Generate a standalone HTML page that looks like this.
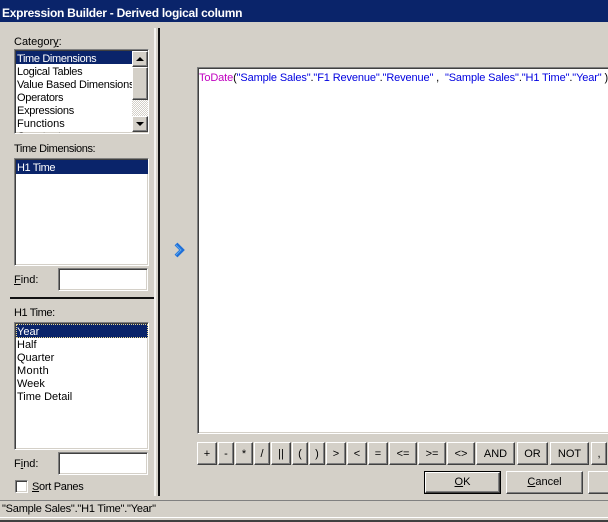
<!DOCTYPE html>
<html><head><meta charset="utf-8">
<style>
html,body{margin:0;padding:0;}
body{width:608px;height:522px;overflow:hidden;background:#d4d0c8;position:relative;font:11px/13px "Liberation Sans",sans-serif;color:#000;}
div,span.a{position:absolute;box-sizing:border-box;}
.t{white-space:nowrap;font-size:11px;line-height:13px;height:13px;margin-top:1px;}
.sunk{background:#fff;border:1px solid;border-color:#808080 #fff #fff #808080;box-shadow:inset 1px 1px 0 #404040,inset -1px -1px 0 #d4d0c8;}
.b{background:#d4d0c8;border:1px solid;border-color:#fff #404040 #404040 #fff;box-shadow:inset -1px -1px 0 #808080;text-align:center;font-size:11px;line-height:22px;white-space:nowrap;}
.sel{background:#0a246a;color:#fff;}
u{text-decoration:underline;}
</style></head><body>
<div style="left:0;top:0;width:608px;height:22px;background:#0a246a;"></div>
<div class="t" style="left:2px;top:6px;color:#fff;font-weight:bold;font-size:12px;letter-spacing:-0.26px;">Expression Builder - Derived logical column</div>

<div style="left:154px;top:28px;width:2px;height:468px;background:#f4f2ee;"></div>
<div style="left:158px;top:28px;width:2px;height:468px;background:#111;"></div>

<div class="t" style="left:14px;top:35px;">Categor<u>y</u>:</div>
<div class="sunk" style="left:14px;top:49px;width:135px;height:85px;overflow:hidden;">
  <div class="sel" style="left:1px;top:1px;width:116px;height:13px;"></div>
  <div class="t" style="left:2px;top:2px;color:#fff;letter-spacing:-0.35px;">Time Dimensions</div>
  <div class="t" style="left:2px;top:15px;letter-spacing:-0.3px;">Logical Tables</div>
  <div class="t" style="left:2px;top:28px;letter-spacing:-0.22px;">Value Based Dimensions</div>
  <div class="t" style="left:2px;top:41px;letter-spacing:-0.3px;">Operators</div>
  <div class="t" style="left:2px;top:54px;letter-spacing:-0.27px;">Expressions</div>
  <div class="t" style="left:2px;top:67px;">Functions</div>
  <div class="t" style="left:2px;top:80px;">Constants</div>
  <div style="left:117px;top:1px;width:16px;height:81px;background:repeating-conic-gradient(#fff 0 25%,#d4d0c8 0 50%) 0 0/2px 2px;"></div>
  <div class="b" style="left:117px;top:1px;width:16px;height:16px;"></div>
  <div style="left:121px;top:7px;width:0;height:0;border:4px solid transparent;border-top:0;border-bottom-color:#000;"></div>
  <div class="b" style="left:117px;top:17px;width:16px;height:33px;"></div>
  <div class="b" style="left:117px;top:66px;width:16px;height:16px;"></div>
  <div style="left:121px;top:72px;width:0;height:0;border:4px solid transparent;border-bottom:0;border-top-color:#000;"></div>
</div>

<div class="t" style="left:14px;top:142px;letter-spacing:-0.4px;">Time Dimensions:</div>
<div class="sunk" style="left:14px;top:158px;width:135px;height:108px;">
  <div class="sel" style="left:1px;top:1px;width:132px;height:14px;"></div>
  <div class="t" style="left:2px;top:2px;color:#fff;letter-spacing:-0.4px;">H1 Time</div>
</div>
<div class="t" style="left:14px;top:273px;"><u>F</u>ind:</div>
<div class="sunk" style="left:58px;top:268px;width:90px;height:23px;"></div>

<div style="left:10px;top:297px;width:144px;height:2px;background:#111;"></div>

<div class="t" style="left:14px;top:306px;letter-spacing:-0.4px;">H1 Time:</div>
<div class="sunk" style="left:14px;top:322px;width:135px;height:128px;">
  <div class="sel" style="left:1px;top:1px;width:132px;height:14px;outline:1px dotted #e8d890;outline-offset:-1px;"></div>
  <div class="t" style="left:2px;top:2px;color:#fff;">Year</div>
  <div class="t" style="left:2px;top:15px;">Half</div>
  <div class="t" style="left:2px;top:28px;">Quarter</div>
  <div class="t" style="left:2px;top:41px;letter-spacing:0.3px;">Month</div>
  <div class="t" style="left:2px;top:54px;">Week</div>
  <div class="t" style="left:2px;top:67px;">Time Detail</div>
</div>
<div class="t" style="left:14px;top:457px;">F<u>i</u>nd:</div>
<div class="sunk" style="left:58px;top:452px;width:90px;height:23px;"></div>
<div class="sunk" style="left:15px;top:480px;width:13px;height:13px;"></div>
<div class="t" style="left:32px;top:480px;letter-spacing:-0.3px;"><u>S</u>ort Panes</div>

<svg style="position:absolute;left:172px;top:242px;" width="14" height="16" viewBox="0 0 14 16">
<path d="M4 2 L10 8 L4 14" fill="none" stroke="#1f6fd8" stroke-width="4"/>
<path d="M4 3 L9 8 L4 13" fill="none" stroke="#5aa8f0" stroke-width="1"/>
</svg>

<div class="sunk" style="left:197px;top:67px;width:413px;height:367px;">
  <div class="t" style="left:1px;top:3px;letter-spacing:-0.13px;"><span style="color:#c000c0;">ToDate</span>(<span style="color:#0000e0;">"Sample Sales"</span>.<span style="color:#0000e0;">"F1 Revenue"</span>.<span style="color:#0000e0;">"Revenue"</span> ,&nbsp; <span style="color:#0000e0;">"Sample Sales"</span>.<span style="color:#0000e0;">"H1 Time"</span>.<span style="color:#0000e0;">"Year"</span> )</div>
</div>

<div class="b" style="left:197px;top:442px;width:20px;height:23px;">+</div>
<div class="b" style="left:218px;top:442px;width:16px;height:23px;">-</div>
<div class="b" style="left:235px;top:442px;width:18px;height:23px;">*</div>
<div class="b" style="left:254px;top:442px;width:16px;height:23px;">/</div>
<div class="b" style="left:271px;top:442px;width:20px;height:23px;">||</div>
<div class="b" style="left:292px;top:442px;width:16px;height:23px;">(</div>
<div class="b" style="left:309px;top:442px;width:16px;height:23px;">)</div>
<div class="b" style="left:326px;top:442px;width:20px;height:23px;">&gt;</div>
<div class="b" style="left:347px;top:442px;width:20px;height:23px;">&lt;</div>
<div class="b" style="left:368px;top:442px;width:20px;height:23px;">=</div>
<div class="b" style="left:389px;top:442px;width:28px;height:23px;">&lt;=</div>
<div class="b" style="left:418px;top:442px;width:28px;height:23px;">&gt;=</div>
<div class="b" style="left:447px;top:442px;width:28px;height:23px;">&lt;&gt;</div>
<div class="b" style="left:476px;top:442px;width:39px;height:23px;">AND</div>
<div class="b" style="left:517px;top:442px;width:31px;height:23px;">OR</div>
<div class="b" style="left:550px;top:442px;width:39px;height:23px;">NOT</div>
<div class="b" style="left:591px;top:442px;width:16px;height:23px;">,</div>

<div style="left:424px;top:471px;width:77px;height:23px;border:1px solid #000;"><div class="b" style="left:0;top:0;width:75px;height:21px;line-height:19px;"><u>O</u>K</div></div>
<div class="b" style="left:506px;top:471px;width:77px;height:23px;line-height:20px;"><u>C</u>ancel</div>
<div class="b" style="left:588px;top:471px;width:77px;height:23px;"></div>

<div style="left:0;top:500px;width:608px;height:1px;background:#808080;"></div>
<div class="t" style="left:2px;top:502px;letter-spacing:-0.22px;">"Sample Sales"."H1 Time"."Year"</div>
<div style="left:0;top:517px;width:608px;height:1px;background:#fff;"></div>
<div style="left:0;top:520px;width:608px;height:2px;background:#404040;"></div>
</body></html>
